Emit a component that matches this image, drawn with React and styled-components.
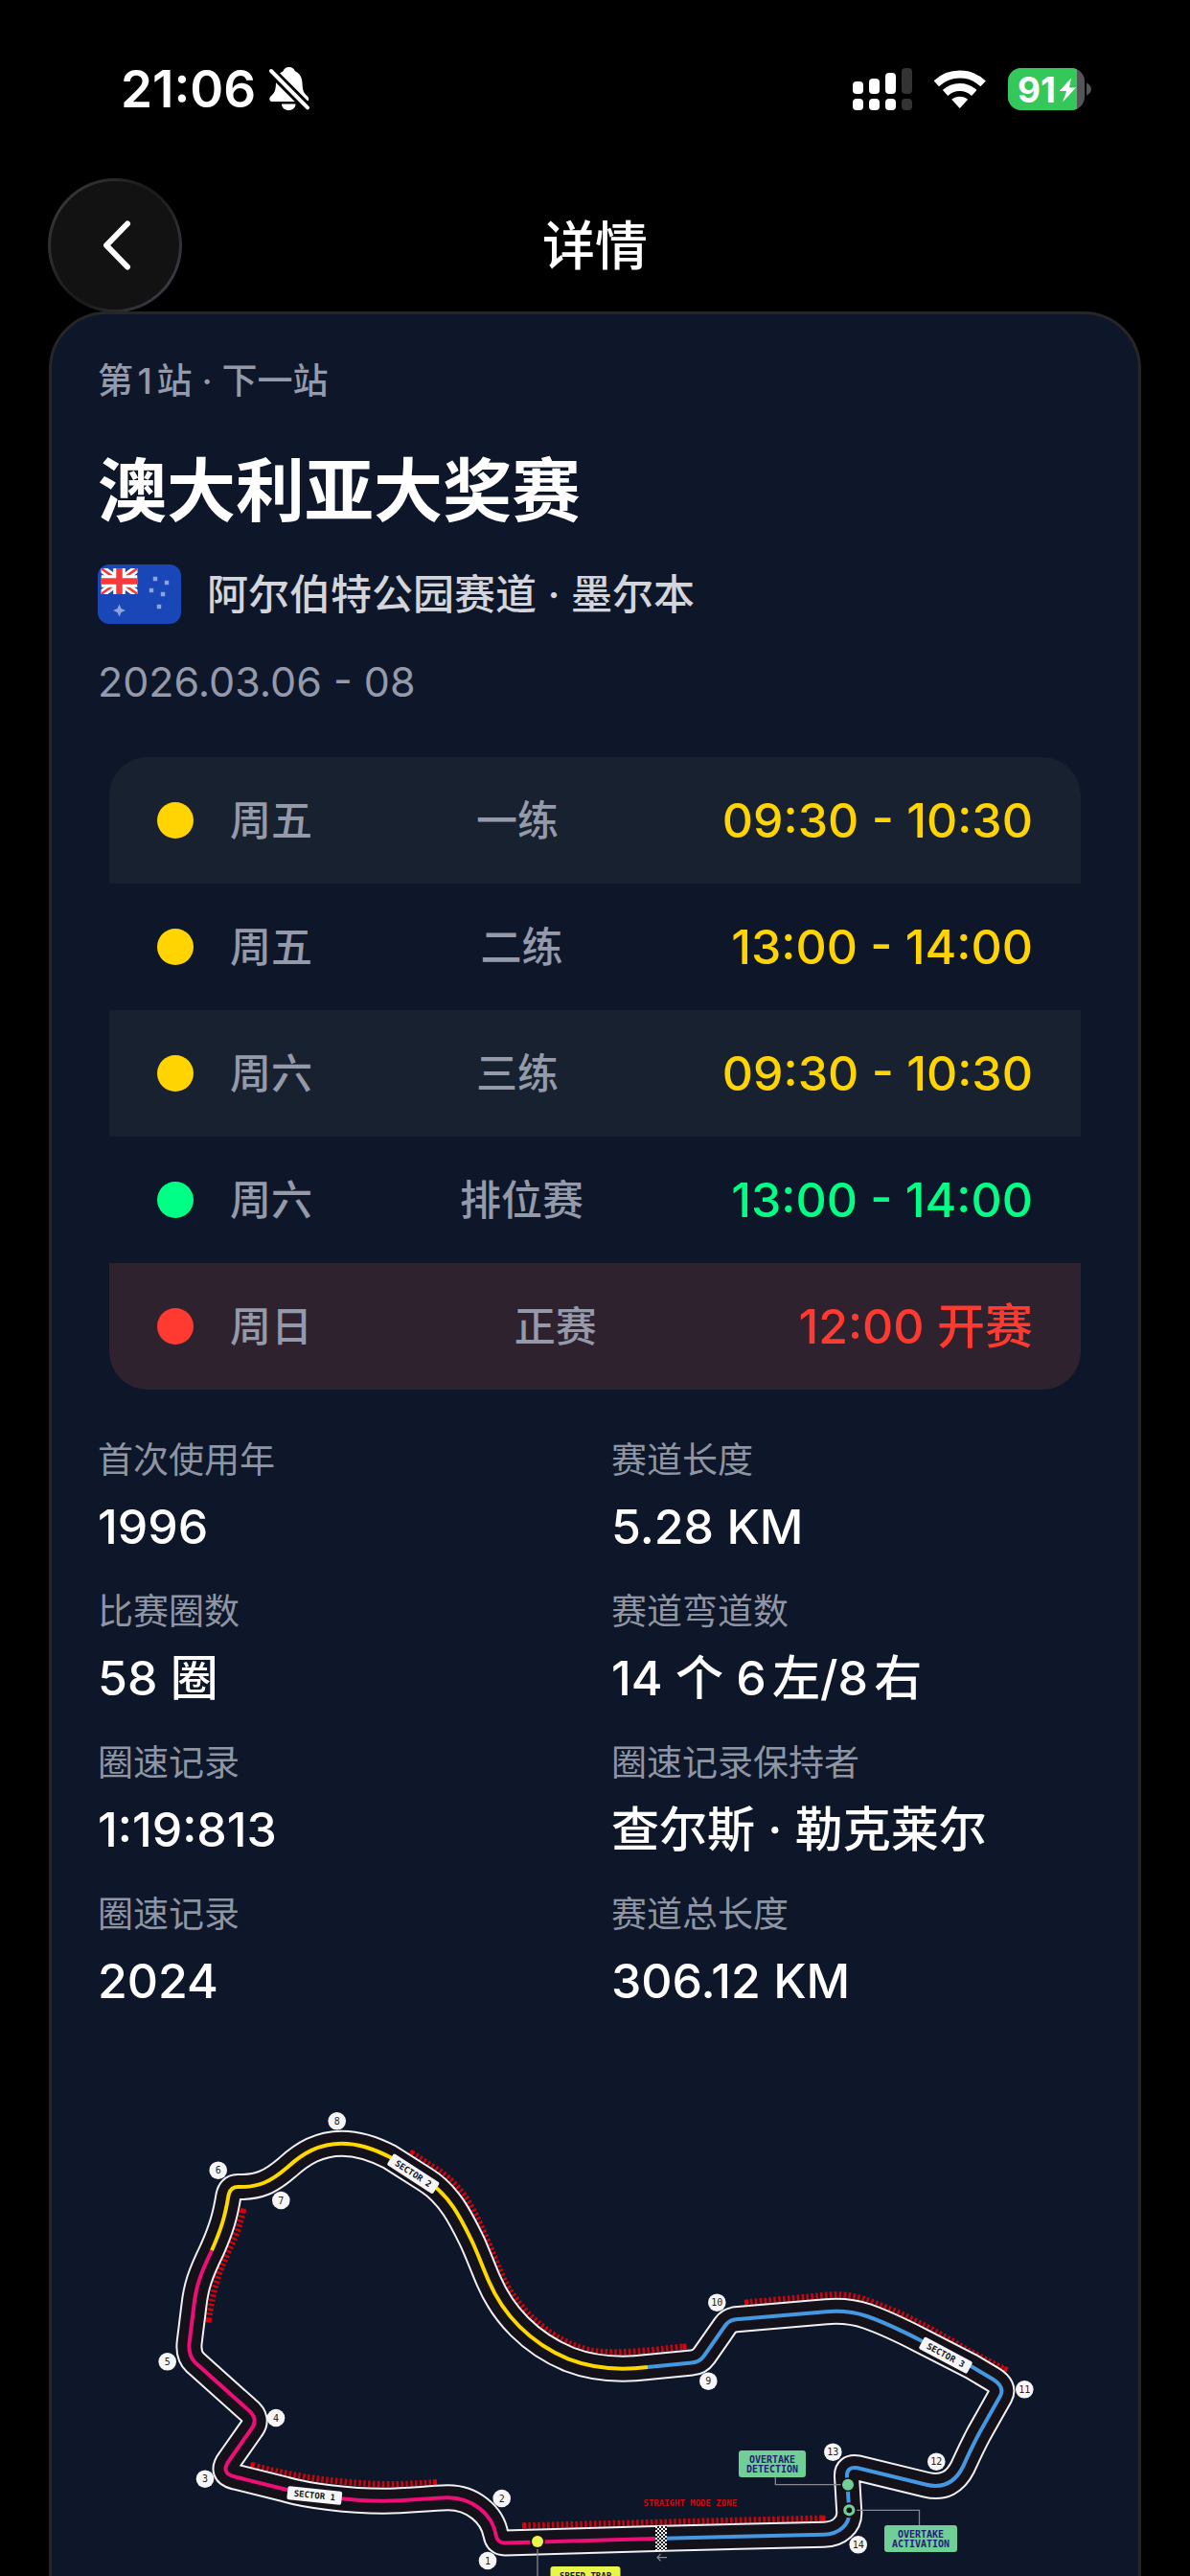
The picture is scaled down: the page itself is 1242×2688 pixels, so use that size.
import React from "react";
import styled, { createGlobalStyle } from "styled-components";

const color = {
  page: "#000000",
  card: "#0e1729",
  cardBorder: "#262626",
  rowAlt: "#182130",
  rowRace: "#2f222f",
  practice: "#ffd400",
  qualifying: "#00ff85",
  race: "#ff3a30",
  muted: "#949aa9",
  label: "#8f95a3",
  soft: "#d3d5db",
};

const GlobalStyle = createGlobalStyle`
  * { box-sizing: border-box; }
  body {
    margin: 0;
    background: ${color.page};
    color: #ffffff;
    font-family: Inter, "Noto Sans CJK SC", sans-serif;
    text-autospace: normal;
    -webkit-font-smoothing: antialiased;
  }
`;

/* ---------- screen and bars ---------- */

const Screen = styled.div`
  height: 100vh;
  overflow: hidden;
  display: flex;
  flex-direction: column;
`;

const StatusBar = styled.div`
  flex: none;
  display: flex;
  align-items: center;
  justify-content: space-between;
  padding: 60px 103px 60px 126px;
  line-height: 66px;
`;

const StatusGroup = styled.div`
  display: flex;
  align-items: center;
  gap: ${(p) => p.$gap}px;
`;

const Clock = styled.time`
  font-size: 53px;
  font-weight: 600;
`;

const Header = styled.header`
  flex: none;
  display: grid;
  grid-template-columns: 1fr auto 1fr;
  align-items: center;
  padding: 0 50px;
`;

const BackButton = styled.button`
  width: 140px;
  height: 140px;
  margin: 0 0 -1px;
  padding: 0;
  border: 3px solid transparent;
  border-radius: 50%;
  color: #ffffff;
  background:
    linear-gradient(#121212, #121212) padding-box,
    linear-gradient(125deg, #383838 10%, #1c1c1c 45%, #1c1c1c 55%, #383c44 88%) border-box;
  display: flex;
  align-items: center;
  justify-content: center;
`;

const HeaderTitle = styled.h1`
  margin: 0;
  font-size: 55px;
  line-height: 72px;
  font-weight: 500;
`;

/* ---------- race card ---------- */

const Card = styled.main`
  flex: none;
  margin: 0 51px;
  padding: 44px 48px 48px;
  border: 3px solid ${color.cardBorder};
  border-radius: 60px;
  background: ${color.card};
`;

const Kicker = styled.p`
  margin: 0;
  font-size: 37px;
  line-height: 52px;
  font-weight: 500;
  color: ${color.muted};
`;

const RaceName = styled.h2`
  margin: 38px 0 27px;
  font-size: 72px;
  line-height: 100px;
  font-weight: 600;
`;

const Venue = styled.p`
  margin: 0;
  display: flex;
  align-items: center;
  gap: 27px;
  font-size: 43px;
  line-height: 62px;
  font-weight: 500;
  color: ${color.soft};
`;

const RaceDate = styled.p`
  margin: 34px 0 0;
  font-size: 43px;
  line-height: 52px;
  color: ${color.muted};
`;

const Schedule = styled.ul`
  list-style: none;
  margin: 53px 12px 0;
  padding: 0;
  border-radius: 40px;
  overflow: hidden;
`;

const Session = styled.li`
  display: flex;
  align-items: center;
  justify-content: space-between;
  padding: 33px 50px;
  line-height: 66px;
  background: ${(p) => p.$background};
`;

const SessionDay = styled.span`
  display: flex;
  align-items: center;
  gap: 38px;
  font-size: 43px;
  font-weight: 500;
  color: ${color.muted};
`;

const Dot = styled.i`
  width: 38px;
  height: 38px;
  border-radius: 50%;
  background: ${(p) => p.$color};
`;

const SessionName = styled.span`
  font-size: 43px;
  font-weight: 500;
  color: ${color.muted};
`;

const SessionTime = styled.time`
  font-size: 50px;
  font-weight: 500;
  color: ${(p) => p.$color};
`;

const Facts = styled.dl`
  margin: 48px 0 40px;
  display: grid;
  grid-template-columns: 1fr 1fr;
  gap: 30px 34px;
`;

const Fact = styled.div`
  display: flex;
  flex-direction: column;
  gap: 10px;
`;

const FactLabel = styled.dt`
  font-size: 37px;
  line-height: 52px;
  color: ${color.label};
`;

const FactValue = styled.dd`
  margin: 0;
  font-size: 50px;
  line-height: 66px;
  font-weight: 500;
`;

/* ---------- status icons ---------- */

const BellOff = () => (
  <svg width="43" height="46" viewBox="0 0 43 46" aria-hidden="true">
    <path
      fill="#fff"
      d="M20.7 0C17.5 0 15 2 14.5 4.3 9.5 6.5 7.3 11 7 16.5 6.7 25 5.5 27 1.5 30.5-.5 32.5 0 36 3 36h35.5c3 0 3.500-3.500 1.500-5.500C36 27 34.800 25 34.500 16.500 34.200 11 32 6.500 27 4.300 26.400 2 23.900 0 20.700 0ZM13 38.500h14.500C27.500 42.500 24.500 45 20.300 45S13 42.500 13 38.500Z"
    />
    <path d="M1.700 4 42 44.300" stroke="#000" strokeWidth="10" />
    <path d="M2 4 40 42.300" stroke="#fff" strokeWidth="4" strokeLinecap="round" />
  </svg>
);

const SIGNAL = [
  { top: 14, on: true },
  { top: 11, on: true },
  { top: 5, on: true },
  { top: 0, on: false },
];

const Signal = () => (
  <svg width="62" height="44" viewBox="0 0 62 44" aria-hidden="true">
    {SIGNAL.map((bar, i) => (
      <g key={i} fill={bar.on ? "#fff" : "#333"}>
        <rect x={i * 17} y={bar.top} width="11" height={27 - bar.top} rx="4" />
        <rect x={i * 17} y="32" width="11" height="12" rx="4" />
      </g>
    ))}
  </svg>
);

const Wifi = () => (
  <svg width="54" height="40" viewBox="0 0 54 40" aria-hidden="true">
    <g fill="none" stroke="#fff" strokeWidth="8">
      <path d="M2.300 14.300A35.500 35.500 0 0 1 51.100 14.300" />
      <path d="M11.600 24A22 22 0 0 1 41.800 24" />
    </g>
    <path fill="#fff" d="M18.200 30.800A13 13 0 0 1 35.200 30.800L26.700 40Z" />
  </svg>
);

const Battery = () => (
  <svg width="87" height="44" viewBox="0 0 87 44" role="img" aria-label="91%">
    <clipPath id="battery-shell">
      <rect width="80" height="44" rx="14" />
    </clipPath>
    <g clipPath="url(#battery-shell)">
      <rect width="80" height="44" fill="#555558" />
      <rect width="72" height="44" fill="#34c759" />
    </g>
    <path d="M82 15.500C88.500 18 88.500 26 82 28.500Z" fill="#555558" />
    <text x="30" y="36" textAnchor="middle" fontSize="37" fontWeight="700" fill="#fff" fontFamily="Inter, sans-serif">
      91
    </text>
    <path d="M67 9 52.500 24.500h8L56 37 72 20H64.500Z" fill="#fff" stroke="#34c759" strokeWidth="1" />
  </svg>
);

const ChevronLeft = () => (
  <svg width="134" height="134" viewBox="3 3 134 134" fill="none" aria-hidden="true">
    <path d="M83 47.500 61 70l22 22.500" stroke="currentColor" strokeWidth="6" strokeLinecap="round" strokeLinejoin="round" />
  </svg>
);

const FLAG_STARS = [
  [60, 15],
  [72, 19],
  [56, 27],
  [68, 31],
  [64, 44],
];

const AustraliaFlag = () => (
  <svg width="87" height="62" viewBox="0 0 87 62" role="img" aria-label="澳大利亚">
    <rect width="87" height="62" rx="12" fill="#1a47b8" />
    <svg x="3.500" y="4" width="38" height="27" viewBox="0 0 38 27">
      <path d="M0 0 38 27M38 0 0 27" stroke="#fff" strokeWidth="8" />
      <path d="M0 0 38 27M38 0 0 27" stroke="#f93939" strokeWidth="2.600" />
      <path d="M19 0v27M0 13.500h38" stroke="#fff" strokeWidth="12.500" />
      <path d="M19 0v27M0 13.500h38" stroke="#f93939" strokeWidth="6.500" />
    </svg>
    <g fill="#8fa3db">
      {FLAG_STARS.map(([x, y]) => (
        <rect key={`${x}-${y}`} x={x - 2.2} y={y - 2.2} width="4.400" height="4.400" />
      ))}
      <path d="M22.500 41.500 24.500 46 29 48 24.500 50 22.500 54.500 20.500 50 16 48 20.500 46Z" />
    </g>
  </svg>
);

/* ---------- circuit map ---------- */

const MapDrawing = styled.svg`
  display: block;
  width: 100%;
  height: auto;
  font-family: "DejaVu Sans Mono", "Liberation Mono", monospace;
`;

const MapText = styled.text`
  font-size: ${(p) => p.$size || 9}px;
  font-weight: ${(p) => p.$weight || 700};
  text-anchor: middle;
  fill: ${(p) => p.$fill};
`;

const CENTRE_LINE = [
  {
    color: "#ed0f76",
    d: "684 2649 L527 2653.500Q519 2653.500 517.500 2645C514 2624 493 2606 467 2606.300C445 2607 425 2609.700 400 2609.700C364 2609.700 320 2604 298.300 2597.700L246 2584.700Q229 2581 239.500 2567L262 2535Q271 2524 258 2513.800L204 2465.500Q196 2458 197.700 2444L202.300 2406.700C204.500 2386 209 2373 221 2348.300",
  },
  {
    color: "#ffd800",
    d: "221 2348.300C231 2326 235 2312 238.300 2292Q240 2282 248 2282C270 2282.500 282 2277 300 2261.500C316 2247 333 2236.700 357 2236.700C375 2236.700 392 2243 406.700 2250.700L445 2275C470 2291 482 2317 493.300 2340C500 2355 504 2366 510 2380C525 2415 553 2445 593.300 2461.700C620 2472 648 2473.500 676 2470",
  },
  {
    color: "#4498e2",
    d: "676 2470 L722 2465.500Q730 2465 735 2458L757 2426.500Q761 2421 768 2420.300L862 2412.300C876 2411 890 2412 905 2417C925 2424 945 2434 960 2441.700L1013.300 2469L1036 2482.500Q1049 2490.500 1044 2500L1022 2539C1014 2554 1010 2563 1005 2574C997 2590 985 2597 967 2592.800L895 2575.300Q883.500 2573.500 884 2584L886.300 2622C886.500 2634 876 2644.500 860 2644.700L684 2649",
  },
];

const FULL_LAP =
  "M" + CENTRE_LINE.map((sector) => sector.d.replace(/^[\d.]+ [\d.]+ ?/, "")).reduce((lap, part) => lap + part, "684 2649") + "Z";

const KERBS = [
  "M253.700 2306.700C250 2325 244 2338 239 2348C228 2372 222.500 2388 217.700 2421.700",
  "M263.300 2572.500C310 2585 350 2590.500 400 2592.300C420 2592.500 435 2591.500 455 2590.300",
  "M429.700 2246.500L452 2261C482 2279 494 2304 507 2334C519 2361 525 2382 538 2398C558 2426 590 2449 622 2453.500C650 2456.500 680 2452 715 2448.500",
  "M778 2402.700L862 2395C880 2393 896 2396 915 2404C950 2417 990 2440 1011 2453L1050 2473",
  "M546.500 2635.500L860 2627.700",
];

const KERB_ENDS = [
  [253.7, 2306.5, 12],
  [217.7, 2421.5, 8],
  [263.3, 2572.5, 104],
  [454, 2590.3, 87],
  [429.7, 2246.5, 122],
  [714.5, 2448.7, 84],
  [779, 2402.7, 84],
  [1049.5, 2472.5, 118],
  [547, 2635.5, 88],
  [859.5, 2627.7, 88],
];

const CORNERS = [
  [1, 509, 2672],
  [2, 523.7, 2607],
  [3, 214, 2586.7],
  [4, 288, 2523],
  [5, 174.7, 2464.3],
  [6, 227.7, 2264.7],
  [7, 293.3, 2296],
  [8, 351.7, 2213.3],
  [9, 739.3, 2484.7],
  [10, 748.3, 2402.7],
  [11, 1069.3, 2493.3],
  [12, 977.3, 2568.7],
  [13, 869.3, 2558.7],
  [14, 895.7, 2655.3],
];

const SECTOR_SIGNS = [
  ["SECTOR 1", 328.3, 2604, 6],
  ["SECTOR 2", 431.3, 2268.3, 33],
  ["SECTOR 3", 987, 2457.7, 28],
];

const CircuitMap = () => (
  <MapDrawing viewBox="102 2140 1038 600" role="img" aria-label="赛道图">
    <defs>
      <pattern id="finish" width="4" height="4" patternUnits="userSpaceOnUse">
        <rect width="4" height="4" fill="#1b1b22" />
        <path d="M0 0h2v2h-2zM2 2h2v2h-2z" fill="#fff" />
      </pattern>
    </defs>

    <g fill="none" stroke="#c9040b" strokeWidth="6.500">
      {KERBS.map((d) => (
        <path key={d} d={d} strokeDasharray="2.600 2.300" />
      ))}
    </g>
    {KERB_ENDS.map(([x, y, angle]) => (
      <rect key={`${x}-${y}`} x={x - 3} y={y - 2} width="6" height="4" fill="#e00008" transform={`rotate(${angle} ${x} ${y})`} />
    ))}

    <path d={FULL_LAP} fill="none" stroke="#f1f1f4" strokeWidth="28" />
    <path d={FULL_LAP} fill="none" stroke="#13121b" strokeWidth="24" />
    {CENTRE_LINE.map((sector) => (
      <path key={sector.color} d={`M${sector.d}`} fill="none" stroke={sector.color} strokeWidth="4" />
    ))}

    <rect x="684" y="2636" width="12" height="25" fill="url(#finish)" />
    <path d="M696 2668.700H686M689.500 2665 686 2668.700 689.500 2672.400" fill="none" stroke="#8c8c92" strokeWidth="1.200" />

    {SECTOR_SIGNS.map(([name, x, y, angle]) => (
      <g key={name} transform={`translate(${x} ${y}) rotate(${angle})`}>
        <rect x="-28.500" y="-7" width="57" height="14" rx="2" fill="#f6f6f8" />
        <MapText y="3" $fill="#16161c">{name}</MapText>
      </g>
    ))}

    {CORNERS.map(([number, x, y]) => (
      <g key={number}>
        <circle cx={x} cy={y} r="9.300" fill="#f6f6f8" />
        <MapText x={x} y={y + 3.5} $size={10} $weight={400} $fill="#222">{number}</MapText>
      </g>
    ))}

    <MapText x="720.300" y="2615" $fill="#d3060c">STRAIGHT MODE ZONE</MapText>

    <g fill="none" stroke="#85878d" strokeWidth="1.300">
      <path d="M809.300 2585v7.700H879" />
      <path d="M893 2619.300h66.500V2635" />
      <path d="M561 2660v30.500h14" />
    </g>

    <circle cx="885" cy="2592.700" r="7.500" fill="#13121b" />
    <circle cx="885" cy="2592.700" r="6" fill="#6fcf97" />
    <circle cx="886.300" cy="2619.300" r="8" fill="#13121b" />
    <circle cx="886.300" cy="2619.300" r="4.500" fill="#0b0b12" stroke="#6fcf97" strokeWidth="3.200" />
    <circle cx="561" cy="2652" r="7.800" fill="#13121b" />
    <circle cx="561" cy="2652" r="6" fill="#e8f64a" />

    <rect x="771" y="2557" width="70" height="28" rx="3" fill="#6fcf97" />
    <MapText x="806" y="2570" $size={10} $fill="#2a1a78">OVERTAKE</MapText>
    <MapText x="806" y="2580" $size={10} $fill="#2a1a78">DETECTION</MapText>

    <rect x="923" y="2635" width="76" height="28" rx="3" fill="#6fcf97" />
    <MapText x="961" y="2648" $size={10} $fill="#2a1a78">OVERTAKE</MapText>
    <MapText x="961" y="2658" $size={10} $fill="#2a1a78">ACTIVATION</MapText>

    <rect x="574.500" y="2678" width="73" height="18" rx="3" fill="#e8f64a" />
    <MapText x="611" y="2691" $fill="#16161c">SPEED TRAP</MapText>
  </MapDrawing>
);

/* ---------- content ---------- */

const SESSIONS = [
  { day: "周五", name: "一练", time: "09:30 - 10:30", tint: color.practice, background: color.rowAlt },
  { day: "周五", name: "二练", time: "13:00 - 14:00", tint: color.practice, background: "transparent" },
  { day: "周六", name: "三练", time: "09:30 - 10:30", tint: color.practice, background: color.rowAlt },
  { day: "周六", name: "排位赛", time: "13:00 - 14:00", tint: color.qualifying, background: "transparent" },
  { day: "周日", name: "正赛", time: "12:00 开赛", tint: color.race, background: color.rowRace },
];

const FACTS = [
  ["首次使用年", "1996"],
  ["赛道长度", "5.28 KM"],
  ["比赛圈数", "58 圈"],
  ["赛道弯道数", "14 个 6左/8右"],
  ["圈速记录", "1:19:813"],
  ["圈速记录保持者", "查尔斯 · 勒克莱尔"],
  ["圈速记录", "2024"],
  ["赛道总长度", "306.12 KM"],
];

export default function App() {
  return (
    <Screen>
      <GlobalStyle />
      <StatusBar>
        <StatusGroup $gap={14}>
          <Clock>21:06</Clock>
          <BellOff />
        </StatusGroup>
        <StatusGroup $gap={23}>
          <Signal />
          <Wifi />
          <Battery />
        </StatusGroup>
      </StatusBar>

      <Header>
        <BackButton type="button" aria-label="返回">
          <ChevronLeft />
        </BackButton>
        <HeaderTitle>详情</HeaderTitle>
      </Header>

      <Card>
        <Kicker>第1站 · 下一站</Kicker>
        <RaceName>澳大利亚大奖赛</RaceName>
        <Venue>
          <AustraliaFlag />
          阿尔伯特公园赛道 · 墨尔本
        </Venue>
        <RaceDate>2026.03.06 - 08</RaceDate>

        <Schedule>
          {SESSIONS.map((session) => (
            <Session key={session.day + session.name} $background={session.background}>
              <SessionDay>
                <Dot $color={session.tint} />
                {session.day}
              </SessionDay>
              <SessionName>{session.name}</SessionName>
              <SessionTime $color={session.tint}>{session.time}</SessionTime>
            </Session>
          ))}
        </Schedule>

        <Facts>
          {FACTS.map(([label, value]) => (
            <Fact key={label + value}>
              <FactLabel>{label}</FactLabel>
              <FactValue>{value}</FactValue>
            </Fact>
          ))}
        </Facts>

        <CircuitMap />
      </Card>
    </Screen>
  );
}
